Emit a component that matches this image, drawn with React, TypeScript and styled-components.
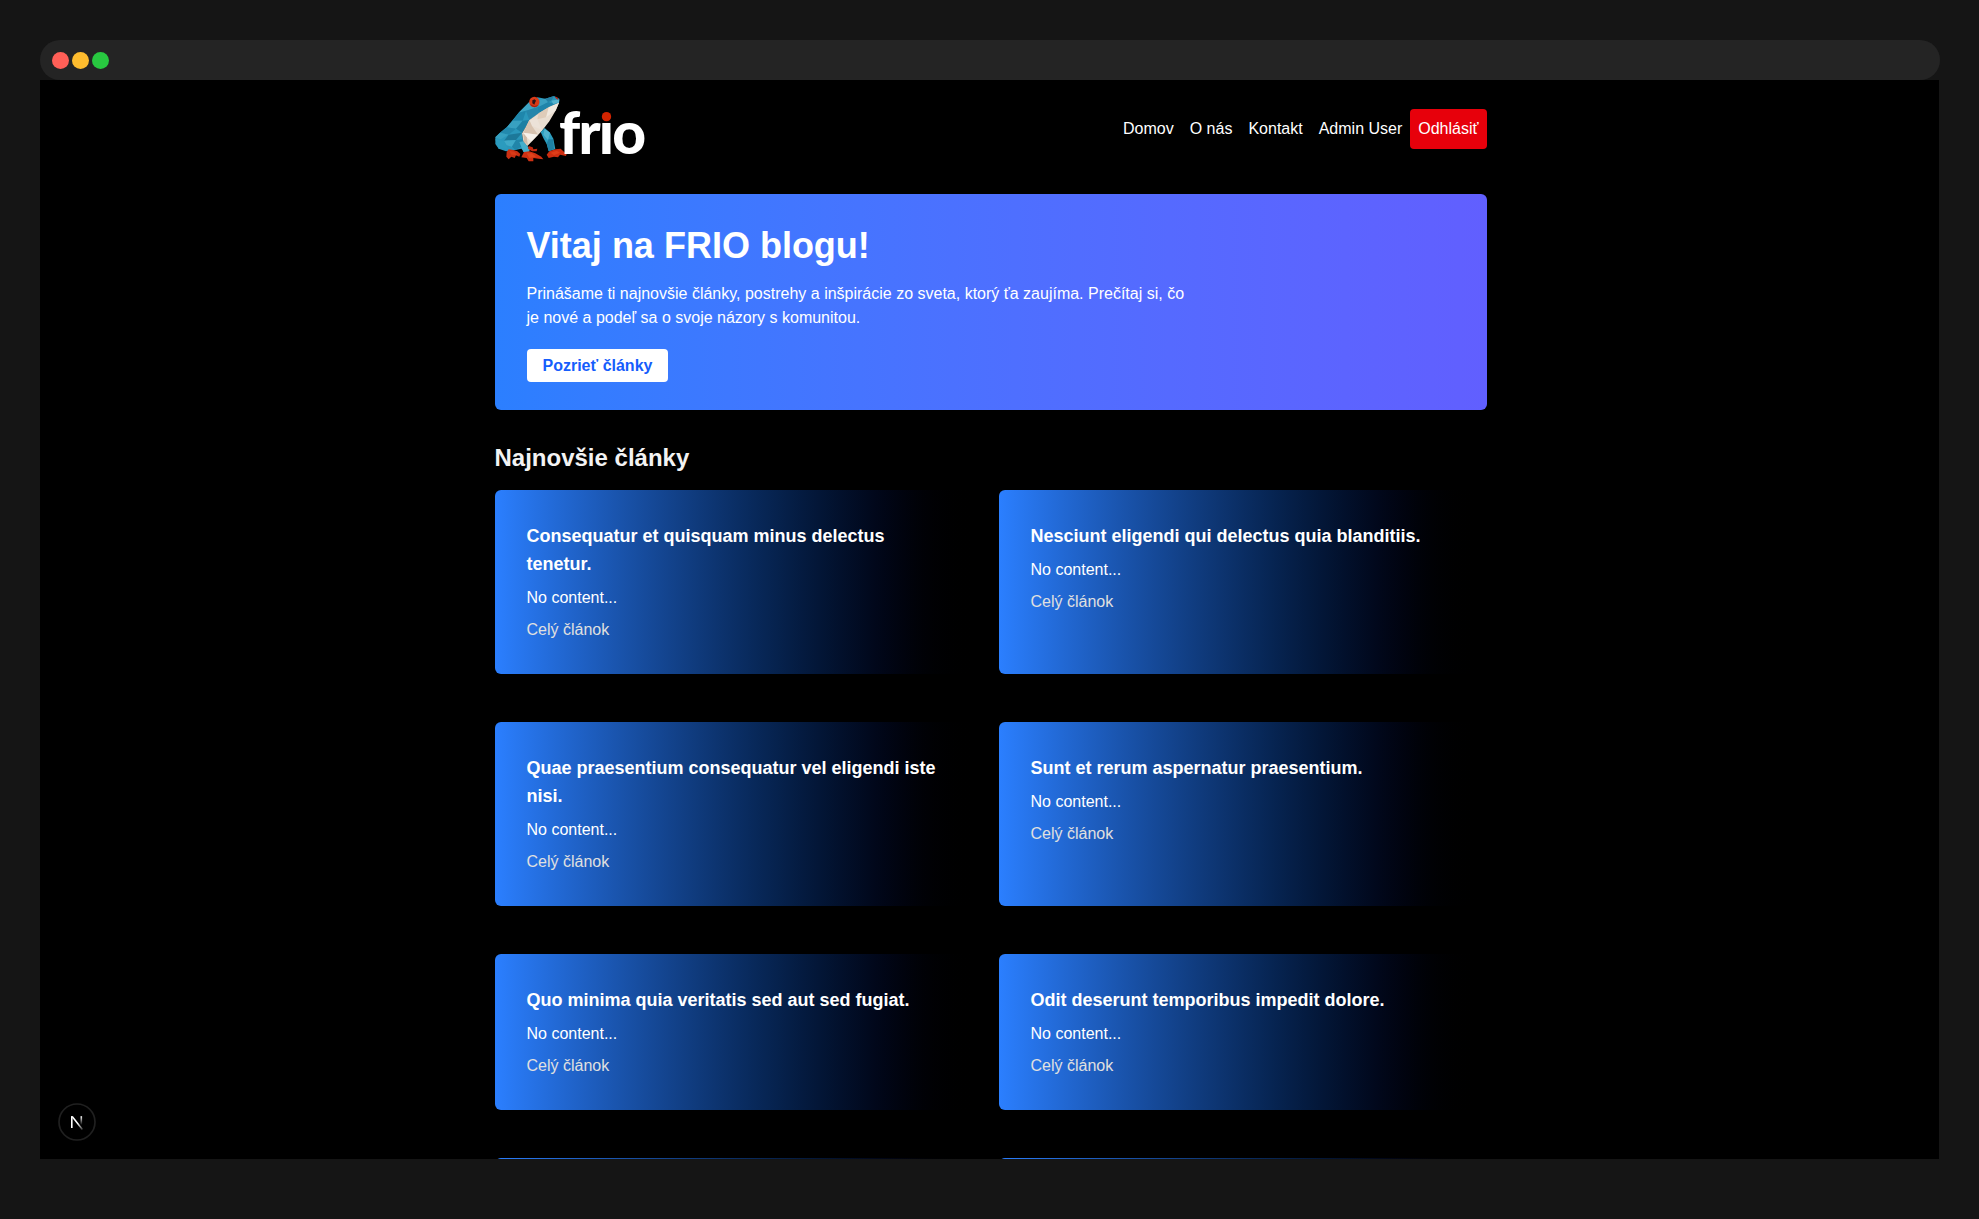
import React from 'react';
import styled, { createGlobalStyle } from 'styled-components';

const Global = createGlobalStyle`
  *, *::before, *::after { box-sizing: border-box; }
  html, body { margin: 0; padding: 0; background: #151515; }
  body { font-family: "Liberation Sans", Arial, Helvetica, sans-serif; font-size: 16px; line-height: 24px; color: #fff; overflow: hidden; }
  h1, h2, h3, p { margin: 0; }
  a { color: inherit; text-decoration: none; }
`;

const Desktop = styled.div`
  height: 1219px;
  padding: 40px 39px 60px 40px;
  background: #151515;
`;

const TitleBar = styled.div`
  display: flex;
  align-items: center;
  gap: 3px;
  width: 1900px;
  height: 40px;
  padding: 1px 12px 0;
  border-radius: 20px;
  background: #242424;
`;

const Light = styled.span<{ $color: string }>`
  width: 17px;
  height: 17px;
  border-radius: 50%;
  background: ${({ $color }) => $color};
`;

const Viewport = styled.div`
  position: relative;
  width: 1899px;
  height: 1079px;
  overflow: hidden;
  background: #000;
`;

const Container = styled.div`
  width: 992px;
  margin-left: 454.5px;
`;

const Header = styled.header`
  display: flex;
  align-items: center;
  justify-content: space-between;
  height: 98px;
`;

const LogoArt = styled.svg`
  display: block;
  width: 152px;
  height: 68px;
  overflow: visible;
`;

const Wordmark = styled.text`
  font-family: Lato, "Open Sans", sans-serif;
  font-size: 176px;
  font-weight: 900;
  fill: #fff;
`;

const Nav = styled.nav`
  display: flex;
  align-items: center;
  gap: 16px;
`;

const LogoutButton = styled.a`
  margin-left: -8px;
  padding: 8px;
  border-radius: 4px;
  background: #e7000b;
`;

const Hero = styled.section`
  margin-top: 16px;
  padding: 32px;
  height: 216px;
  border-radius: 6px;
  background: linear-gradient(to right in oklab, #2b7fff, #615fff);
`;

const HeroTitle = styled.h1`
  font-size: 36px;
  line-height: 40px;
  font-weight: 700;
`;

const HeroText = styled.p`
  max-width: 672px;
  margin: 16px 0 24px;
`;

const HeroLink = styled.a`
  padding: 8px 16px;
  border-radius: 4px;
  background: #fff;
  color: #155dfc;
  font-weight: 600;
`;

const SectionTitle = styled.h2`
  margin: 32px 0 16px;
  font-size: 24px;
  line-height: 32px;
  font-weight: 600;
  color: #f3f3f3;
`;

const Grid = styled.div`
  display: grid;
  grid-template-columns: 1fr 1fr;
  gap: 48px 16px;
`;

const Card = styled.article`
  display: flex;
  flex-direction: column;
  gap: 8px;
  padding: 32px;
  border-radius: 6px;
  background: linear-gradient(to right in oklab, #2b7fff, #000);
`;

const CardTitle = styled.h3`
  font-size: 18px;
  line-height: 28px;
  font-weight: 600;
`;

const CardLink = styled.a`
  color: #e0e0e0;
`;

const DevBadge = styled.div`
  position: absolute;
  left: 18px;
  bottom: 18px;
  width: 38px;
  height: 38px;
`;

const posts = [
  'Consequatur et quisquam minus delectus tenetur.',
  'Nesciunt eligendi qui delectus quia blanditiis.',
  'Quae praesentium consequatur vel eligendi iste nisi.',
  'Sunt et rerum aspernatur praesentium.',
  'Quo minima quia veritatis sed aut sed fugiat.',
  'Odit deserunt temporibus impedit dolore.',
  '',
  '',
];

const facets: [string, string][] = [
  // back and flank
  ['#2a97bb', '148,66 172,52 196,56 222,48 238,56 237,68 206,82 176,100 148,120 138,140 126,158 130,186 146,204 140,222 124,206 106,210 78,214 56,206 46,192 46,172 60,158 82,140 116,98'],
  ['#3fa5c4', '148,66 172,82 138,92 116,98'],
  ['#1f86ab', '116,98 138,92 128,122 98,122'],
  ['#38a0c1', '98,122 128,122 108,146 80,142'],
  ['#1d7fa3', '108,146 128,122 148,120 126,158'],
  ['#2389ad', '80,142 108,146 86,164 60,158'],
  ['#36a0c0', '60,158 86,164 62,178 46,172'],
  ['#1c7899', '86,164 126,158 108,180 72,182'],
  ['#2b9bbe', '46,178 72,182 84,206 56,206'],
  ['#3fa9c8', '72,182 108,180 96,200 80,196'],
  ['#2185a9', '108,180 128,178 132,196 106,210 96,200'],
  ['#45aecb', '118,186 130,184 150,208 144,222 130,216'],
  // head
  ['#1f84aa', '172,82 204,66 222,72 176,100'],
  ['#3a9fc0', '178,60 196,56 204,66 176,80'],
  ['#247fa3', '196,56 222,48 214,62 204,66'],
  ['#56b3cd', '214,62 238,58 237,68 220,72'],
  ['#2586ab', '138,92 172,82 176,100 148,120'],
  // belly
  ['#e9ddd0', '237,68 228,90 208,124 186,152 162,178 142,198 130,184 126,160 138,140 148,120 176,100 206,82'],
  ['#f1e9df', '206,82 237,68 226,92 198,112'],
  ['#dfccb9', '176,100 206,82 198,112 172,118'],
  ['#ece2d8', '148,120 172,118 186,150 156,138'],
  ['#d8c3b0', '148,120 156,138 174,164 130,158'],
  ['#f6f1eb', '130,158 174,164 154,184 140,172'],
  ['#cfb9a5', '130,160 140,172 144,196 132,184'],
  // front leg
  ['#2c9dbe', '182,156 194,144 210,158 220,176 226,208 206,214 200,192 190,174'],
  ['#4fb2cd', '194,146 210,158 204,180 190,164'],
  ['#1f80a3', '200,190 206,178 219,178 222,208 206,213'],
  // feet
  ['#c92f12', '86,208 100,210 112,214 121,222 118,230 108,226 104,234 94,230 86,238 79,230 80,216'],
  ['#d93a18', '88,212 104,216 112,226 94,224'],
  ['#c4290f', '144,206 146,198 158,202 160,208 172,206 170,214 156,214'],
  ['#cf3113', '132,216 148,214 166,220 184,230 190,238 176,236 160,234 160,244 146,244 140,234 124,232'],
  ['#df431c', '140,220 156,220 168,230 148,234'],
  ['#cc2d10', '208,214 226,208 242,206 250,214 260,222 258,228 240,224 234,232 222,230 206,234 200,224'],
  ['#dc3d19', '212,218 230,212 240,218 222,226'],
];

const Logo = () => (
  <LogoArt viewBox="45 45 456 204" role="img" aria-label="frio">
    {facets.map(([fill, points], i) => (
      <polygon key={i} fill={fill} points={points} />
    ))}
    <circle cx="163" cy="66" r="15.500" fill="#d93a18" />
    <path d="M150 72a14 14 0 0 0 25 3l-12 3z" fill="#a81e10" />
    <path d="M157 61l7-3 4 4-3 6-2 6-6-4z" fill="#2a1218" />
    <path d="M224 50l7 1 5 8-6-2z" fill="#b92415" />
    <Wordmark x="237 295.500 356.500 397" y="221">frio</Wordmark>
    <rect x="362" y="80" width="34" height="48" fill="#000" />
    <circle cx="379.500" cy="110" r="14" fill="#d32400" />
  </LogoArt>
);

const NextMark = () => (
  <svg width="38" height="38" viewBox="0 0 38 38">
    <defs>
      <linearGradient id="n-diagonal" gradientUnits="userSpaceOnUse" x1="19" y1="21" x2="24.500" y2="27.500">
        <stop stopColor="#fff" />
        <stop offset="1" stopColor="#fff" stopOpacity="0.15" />
      </linearGradient>
      <linearGradient id="n-stem" x1="0" y1="0" x2="0" y2="1">
        <stop stopColor="#fff" />
        <stop offset="1" stopColor="#fff" stopOpacity="0" />
      </linearGradient>
    </defs>
    <circle cx="19" cy="19" r="18" fill="#000" stroke="#202020" strokeWidth="1.700" />
    <rect x="13" y="13.200" width="1.600" height="11.800" fill="#fff" />
    <path d="M13 13.200H15L25 26L23.800 27Z" fill="url(#n-diagonal)" />
    <rect x="22.500" y="13.200" width="1.600" height="8.800" fill="url(#n-stem)" />
  </svg>
);

const App = () => (
  <>
    <Global />
    <Desktop>
      <TitleBar>
        <Light $color="#ff5f57" />
        <Light $color="#febc2e" />
        <Light $color="#28c840" />
      </TitleBar>
      <Viewport>
        <Container>
          <Header>
            <Logo />
            <Nav>
              <a>Domov</a>
              <a>O nás</a>
              <a>Kontakt</a>
              <a>Admin User</a>
              <LogoutButton>Odhlásiť</LogoutButton>
            </Nav>
          </Header>
          <Hero>
            <HeroTitle>Vitaj na FRIO blogu!</HeroTitle>
            <HeroText>
              Prinášame ti najnovšie články, postrehy a inšpirácie zo sveta, ktorý ťa zaujíma. Prečítaj si, čo je nové a podeľ sa o svoje názory s komunitou.
            </HeroText>
            <HeroLink>Pozrieť články</HeroLink>
          </Hero>
          <SectionTitle>Najnovšie články</SectionTitle>
          <Grid>
            {posts.map((title, i) => (
              <Card key={i}>
                {title && <CardTitle>{title}</CardTitle>}
                {title && <p>No content...</p>}
                {title && <CardLink>Celý článok</CardLink>}
              </Card>
            ))}
          </Grid>
        </Container>
        <DevBadge>
          <NextMark />
        </DevBadge>
      </Viewport>
    </Desktop>
  </>
);

export default App;
